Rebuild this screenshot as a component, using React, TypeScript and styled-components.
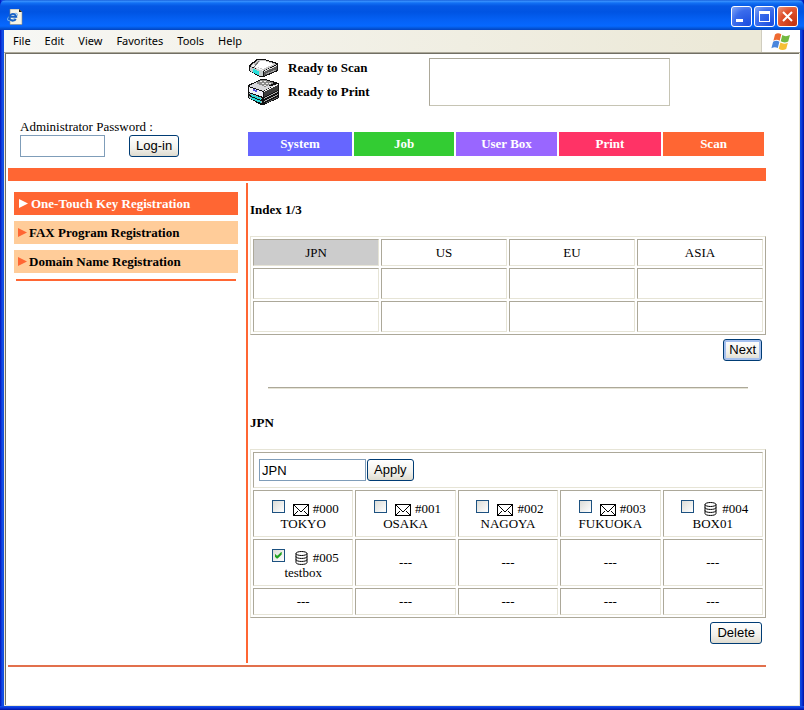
import React, { useState } from "react";
import styled, { createGlobalStyle, css } from "styled-components";

const ORANGE = "#ff6633";
const SERIF = `"Liberation Serif", "Times New Roman", serif`;
const SANS = `"Liberation Sans", Arial, sans-serif`;
const UI = `"Noto Sans", Tahoma, sans-serif`;

const GlobalStyle = createGlobalStyle`
  *, *::before, *::after { box-sizing: border-box; }
  body {
    margin: 0;
    background: #0831d9;
    font: 13px/16px ${SERIF};
    color: #000;
  }
`;

const Window = styled.div`
  display: flex;
  flex-direction: column;
  min-height: 100vh;
  background: linear-gradient(90deg, #0012b0 0, #0831d9 1px, #1656e8 3px, #0a45dc 4px, #0a45dc calc(100% - 4px), #1048dc calc(100% - 3px), #0831d9 calc(100% - 2px), #00139c 100%);
`;

const TitleBar = styled.header`
  display: flex;
  align-items: center;
  justify-content: space-between;
  height: 30px;
  padding: 3px 6px 0 7px;
  border-radius: 6px 6px 0 0;
  background: linear-gradient(#0a4fd0 0, #3d95ff 1px, #1270f4 3px, #0558e4 6px, #0054e3 12px, #0561f5 20px, #0668ff 26px, #0458dc 28px, #0343c0 30px);
`;

const WindowButtons = styled.div`
  display: flex;
  gap: 2px;
`;

const WindowButton = styled.button<{ $close?: boolean }>`
  width: 21px;
  height: 21px;
  padding: 0;
  border: 1px solid #fff;
  border-radius: 3px;
  background: ${(p) =>
    p.$close
      ? "radial-gradient(circle at 85% 90%, #c23410 0, #e0512c 60%, #ea9a82 100%)"
      : "radial-gradient(circle at 85% 90%, #1c4fe0 0, #3a6cec 60%, #86a9f6 100%)"};

  svg { display: block; }
`;

const Frame = styled.div`
  display: flex;
  flex: 1;
  flex-direction: column;
  margin: 0 4px;
  background: #ece9d8;
`;

const BottomEdge = styled.div`
  height: 4px;
  background: linear-gradient(#1656e8, #0831d9 50%, #00139c);
`;

const MenuBar = styled.nav`
  display: flex;
  align-items: stretch;
  height: 23px;
  padding-left: 9px;
  background: linear-gradient(90deg, #f7f7f4, #ece9d8 90%);
  border-bottom: 1px solid #aca899;
`;

const MenuItem = styled.button`
  margin-right: 14px;
  padding: 0;
  border: 0;
  background: none;
  font: 11px/20px ${UI};
  color: #000;
`;

const Throbber = styled.div`
  display: flex;
  align-items: center;
  justify-content: center;
  width: 39px;
  margin-left: auto;
  border-left: 1px solid #d0cdbf;
  background: #fff;
`;

const Page = styled.main`
  flex: 1;
  margin-right: 1px;
  margin-bottom: 1px;
  margin-left: 1px;
  padding: 4px 33px 38px 2px;
  border-top: 1px solid #716f64;
  border-left: 1px solid #716f64;
  background: #fff;
`;

const PageHeader = styled.div`
  display: grid;
  grid-template-columns: 240px 1fr;
  height: 110px;
  padding-right: 2px;
`;

const Login = styled.form`
  align-self: end;
  padding: 0 0 11px 12px;
`;

const LoginLabel = styled.label`
  display: block;
  font-size: 13px;
`;

const LoginRow = styled.div`
  display: flex;
  gap: 24px;
`;

const TextInput = styled.input<{ $width: number }>`
  width: ${(p) => p.$width}px;
  height: 22px;
  padding: 0 2px;
  border: 1px solid #7f9db9;
  border-radius: 0;
  background: #fff;
  font: 13px/16px ${SANS};
  color: #000;
  outline: none;
`;

const PushButton = styled.button<{ $default?: boolean }>`
  height: 22px;
  padding: 0 6px;
  border: 1px solid #003c74;
  border-radius: 3px;
  background: linear-gradient(#fff, #f2f1ec 60%, #dedbcf);
  font: 13px/18px ${SANS};
  color: #000;
  ${(p) =>
    p.$default &&
    css`
      padding: 0 5px;
      box-shadow: inset 0 0 0 2px #a5c0ee;
    `}
`;

const HeaderRight = styled.div`
  display: flex;
  flex-direction: column;
  justify-content: space-between;
  padding-bottom: 12px;
`;

const StatusArea = styled.div`
  display: flex;
`;

const StatusList = styled.div`
  width: 181px;
`;

const StatusLine = styled.div`
  display: flex;
  align-items: center;
  gap: 8px;
  height: 24px;
  padding-bottom: 4px;
  font-weight: bold;

  svg { display: block; }
`;

const MessageBox = styled.div`
  width: 241px;
  height: 48px;
  border: 1px solid;
  border-color: #aca899 #c6c4b4 #c6c4b4 #aca899;
`;

const Tabs = styled.nav`
  display: grid;
  grid-template-columns: 104fr 100fr 101fr 102fr 101fr;
  gap: 2px;
`;

const Tab = styled.a<{ $color: string }>`
  height: 24px;
  background: ${(p) => p.$color};
  color: #fff;
  font-weight: bold;
  line-height: 24px;
  text-align: center;
  text-decoration: none;
`;

const Banner = styled.div`
  height: 13px;
  margin-bottom: 2px;
  background: ${ORANGE};
`;

const Columns = styled.div`
  display: grid;
  grid-template-columns: 238px 1fr;
  margin-bottom: 2px;
`;

const SideMenu = styled.nav`
  display: flex;
  flex-direction: column;
  gap: 6px;
  padding: 9px 8px 0 6px;
`;

const SideItem = styled.a<{ $active?: boolean }>`
  display: flex;
  align-items: center;
  gap: ${(p) => (p.$active ? 3 : 2)}px;
  height: 23px;
  padding-left: ${(p) => (p.$active ? 5 : 4)}px;
  background: ${(p) => (p.$active ? ORANGE : "#ffcc99")};
  color: ${(p) => (p.$active ? "#fff" : "#000")};
  font-weight: bold;
  text-decoration: none;
`;

const SideRule = styled.hr`
  width: 220px;
  height: 2px;
  margin: 0 2px;
  border: 0;
  background: ${ORANGE};
`;

const Content = styled.section`
  padding: 19px 0 19px 2px;
  border-left: 2px solid ${ORANGE};
`;

const Heading = styled.h2`
  margin: 0 0 18px;
  font-size: 13px;
  line-height: 16px;
`;

const Grid = styled.table`
  width: 100%;
  table-layout: fixed;
  border: 1px solid;
  border-color: #e6e4d6 #aca899 #aca899 #e6e4d6;
  border-collapse: separate;
  border-spacing: 2px;
`;

const Cell = styled.td<{ $height: number; $selected?: boolean; $left?: boolean }>`
  height: ${(p) => p.$height}px;
  padding: 0 5px;
  border: 1px solid;
  border-color: #aca899 #e6e4d6 #e6e4d6 #aca899;
  background: ${(p) => (p.$selected ? "#cccccc" : "#fff")};
  text-align: ${(p) => (p.$left ? "left" : "center")};
`;

const Actions = styled.div`
  display: flex;
  justify-content: flex-end;
  padding: 4px 4px 0 0;
`;

const Divider = styled.hr`
  height: 2px;
  margin: 26px 18px;
  border: 0;
  border-top: 1px solid #aca899;
  border-bottom: 1px solid #e6e4d6;
`;

const NameForm = styled.form`
  display: flex;
  gap: 1px;
`;

const Entry = styled.label`
  display: block;
  line-height: 15px;
`;

const EntryLine = styled.span`
  display: flex;
  align-items: flex-end;
  justify-content: center;
  height: 19px;
`;

const EntryIcon = styled.span`
  display: flex;
  margin: 0 4px 0 8px;
`;

const CheckBox = styled.input`
  display: grid;
  place-items: center;
  appearance: none;
  width: 13px;
  height: 13px;
  margin: 0 0 3px 4px;
  border: 1px solid #1c5180;
  background: linear-gradient(135deg, #dcdcd7, #fff);

  &:checked::after {
    content: "";
    width: 7px;
    height: 7px;
    background: #21a121;
    clip-path: polygon(0 2px, 2px 4px, 3px 4px, 7px 0, 7px 3px, 3px 7px, 2px 7px, 0 5px);
  }
`;

const BottomRule = styled.hr`
  height: 2px;
  margin: 0;
  border: 0;
  background: #e2704c;
`;

const PageIcon = () => (
  <svg width="16" height="16" viewBox="0 0 16 16" aria-hidden="true">
    <path d="M3 0h9l3 3v12.500H3z" fill="#f6f4e6" stroke="#8a8a80" strokeWidth=".6" />
    <path d="M12 0v3h3z" fill="#222" />
    <ellipse cx="5.500" cy="8" rx="5.500" ry="2.200" transform="rotate(-32 5.500 8)" fill="none" stroke="#7db8ec" />
    <path d="M8.800 10a3.400 3.400 0 1 1 .4-2.300H3.200" fill="none" stroke="#1660c4" strokeWidth="1.900" />
  </svg>
);

const FlagIcon = () => (
  <svg width="20" height="19" viewBox="0 0 20 19" aria-hidden="true">
    <path d="M4 2.500c2-1.700 4-1.500 6.300-.2L8.700 8.700C6.700 7.400 4.600 7.400 2.400 8.700z" fill="#ee6a32" />
    <path d="M11.300 3c2 1.400 4.600 1.600 7.700.1l-1.800 6.500c-3 1.300-5.400 1-7.500-.3z" fill="#72b840" />
    <path d="M2.100 9.800c2.200-1.300 4.300-1.300 6.300 0l-1.600 6.300c-2-1.300-4.200-1.200-6.400.1z" fill="#4a86dc" />
    <path d="M9.400 10.500c2.100 1.300 4.500 1.600 7.500.3l-1.700 6.300c-2.900 1.500-5.400 1-7.500-.3z" fill="#f5bf35" />
  </svg>
);

const ScanIcon = () => (
  <svg width="32" height="20" viewBox="0 0 32 20" shapeRendering="crispEdges" aria-hidden="true">
    <path d="M1 7L9 1h7l14 4v8l-14 6h-4L1 13z" fill="#111" />
    <path d="M2 8l8-6h6l13 4-12 6-3 1z" fill="#c8c8c8" />
    <path d="M7 8l5-5h4l10 3-11 5z" fill="#fff" />
    <path d="M3 8l3-2 1 2 8 4v1z" fill="#f4f4f4" />
    <path d="M6 9l5-6" stroke="#777" fill="none" />
    <path d="M2 9l13 4v5h-3L2 13z" fill="#c4cccc" />
    <path d="M5 11l6 2v4l-6-2z" fill="#28e0dc" />
    <path d="M16 13l13-6v5l-13 6z" fill="#5a5a5a" />
    <path d="M16 13l13-6v1l-13 6z" fill="#ddd" />
    <path d="M18 16l10-4" stroke="#999" fill="none" />
  </svg>
);

const PrintIcon = () => (
  <svg width="32" height="26" viewBox="0 0 32 26" shapeRendering="crispEdges" aria-hidden="true">
    <path d="M0 6l9-4 4-2h4l14 4v15l-15 7h-3L0 19z" fill="#111" />
    <path d="M1 7l8-4 14 4 7-2-15 7z" fill="#d8d8dc" />
    <path d="M8 4l5-3h4l9 3-9 4z" fill="#8a8a8a" />
    <path d="M12 2h2v1h-2zM16 2h2v1h-2zM14 4h2v1h-2zM18 4h2v1h-2zM21 4h2v1h-2zM16 6h2v1h-2z" fill="#eee" />
    <path d="M1 8l14 5v5L1 13z" fill="#f0f0f8" />
    <path d="M5 10l4 1v2l-4-1z" fill="#5656dc" />
    <path d="M1 14l13 5v1L1 15zM1 17l13 5v2L1 19z" fill="#a9b6b6" />
    <path d="M3 15l10 4v2L3 17zM3 18l10 4v2L3 20z" fill="#28d8d8" />
    <path d="M3 17l10 4v1L3 18z" fill="#111" />
    <path d="M16 13l14-7v5l-14 7z" fill="#3c3c3c" />
    <path d="M16 12l14-7v1l-14 7z" fill="#f4f4f4" />
    <path d="M16 19l14-7v1l-14 7zM16 22l14-7v1l-14 7z" fill="#aaa" />
    <path d="M18 24l12-6" stroke="#555" fill="none" />
  </svg>
);

const ArrowIcon = ({ color }: { color: string }) => (
  <svg width="9" height="9" viewBox="0 0 9 9" aria-hidden="true">
    <path d="M0 0l9 4.500L0 9z" fill={color} />
  </svg>
);

const MailIcon = () => (
  <svg width="16" height="12" viewBox="0 0 16 12" shapeRendering="crispEdges" aria-hidden="true">
    <g fill="none" stroke="#000">
      <path d="M.5.5h15v11H.5z" />
      <path d="M1 1l6 6h2l6-6M1 11l4-4M15 11l-4-4" />
    </g>
  </svg>
);

const BoxIcon = () => (
  <svg width="16" height="14" viewBox="0 0 16 14" aria-hidden="true">
    <g fill="none" stroke="#000">
      <ellipse cx="8.500" cy="2.500" rx="5.500" ry="2" />
      <path d="M3 2.500v9c0 2.600 11 2.600 11 0v-9M3 5.500c0 2.600 11 2.600 11 0M3 8.500c0 2.600 11 2.600 11 0" />
    </g>
  </svg>
);

const MENUS = ["File", "Edit", "View", "Favorites", "Tools", "Help"];

const TABS = [
  { name: "System", color: "#6666ff" },
  { name: "Job", color: "#33cc33" },
  { name: "User Box", color: "#9966ff" },
  { name: "Print", color: "#ff3366" },
  { name: "Scan", color: ORANGE },
];

const SIDE_ITEMS = ["One-Touch Key Registration", "FAX Program Registration", "Domain Name Registration"];

const INDEX_ROWS = [
  { height: 27, names: ["JPN", "US", "EU", "ASIA"] },
  { height: 31, names: ["", "", "", ""] },
  { height: 31, names: ["", "", "", ""] },
];

type Key = { id: string; name: string; kind: "mail" | "box"; checked?: boolean };

const KEY_ROWS: { height: number; keys: (Key | null)[] }[] = [
  {
    height: 47,
    keys: [
      { id: "#000", name: "TOKYO", kind: "mail" },
      { id: "#001", name: "OSAKA", kind: "mail" },
      { id: "#002", name: "NAGOYA", kind: "mail" },
      { id: "#003", name: "FUKUOKA", kind: "mail" },
      { id: "#004", name: "BOX01", kind: "box" },
    ],
  },
  { height: 47, keys: [{ id: "#005", name: "testbox", kind: "box", checked: true }, null, null, null, null] },
  { height: 27, keys: [null, null, null, null, null] },
];

const KeyEntry = ({ entry }: { entry: Key }) => (
  <Entry>
    <EntryLine>
      <CheckBox type="checkbox" defaultChecked={entry.checked} />
      <EntryIcon>{entry.kind === "mail" ? <MailIcon /> : <BoxIcon />}</EntryIcon>
      {entry.id}
    </EntryLine>
    {entry.name}
  </Entry>
);

export default function App() {
  const [indexName, setIndexName] = useState("JPN");
  const stop = (e: React.FormEvent) => e.preventDefault();

  return (
    <>
      <GlobalStyle />
      <Window>
        <TitleBar>
          <PageIcon />
          <WindowButtons>
            <WindowButton aria-label="Minimize">
              <svg width="19" height="19" aria-hidden="true">
                <path d="M4 12h7v3H4z" fill="#fff" />
              </svg>
            </WindowButton>
            <WindowButton aria-label="Maximize">
              <svg width="19" height="19" aria-hidden="true">
                <path d="M4 4h11v11H4zM5 7v7h9V7z" fill="#fff" fillRule="evenodd" />
              </svg>
            </WindowButton>
            <WindowButton $close aria-label="Close">
              <svg width="19" height="19" aria-hidden="true">
                <path d="M5 5l9 9M14 5l-9 9" stroke="#fff" strokeWidth="2" />
              </svg>
            </WindowButton>
          </WindowButtons>
        </TitleBar>

        <Frame>
          <MenuBar>
            {MENUS.map((name) => (
              <MenuItem key={name}>{name}</MenuItem>
            ))}
            <Throbber>
              <FlagIcon />
            </Throbber>
          </MenuBar>

          <Page>
            <PageHeader>
              <Login onSubmit={stop}>
                <LoginLabel htmlFor="password">Administrator Password :</LoginLabel>
                <LoginRow>
                  <TextInput id="password" type="password" $width={85} />
                  <PushButton>Log-in</PushButton>
                </LoginRow>
              </Login>
              <HeaderRight>
                <StatusArea>
                  <StatusList>
                    <StatusLine>
                      <ScanIcon />
                      Ready to Scan
                    </StatusLine>
                    <StatusLine>
                      <PrintIcon />
                      Ready to Print
                    </StatusLine>
                  </StatusList>
                  <MessageBox />
                </StatusArea>
                <Tabs>
                  {TABS.map((tab) => (
                    <Tab key={tab.name} href="#" $color={tab.color}>
                      {tab.name}
                    </Tab>
                  ))}
                </Tabs>
              </HeaderRight>
            </PageHeader>

            <Banner />

            <Columns>
              <SideMenu>
                {SIDE_ITEMS.map((name, i) => (
                  <SideItem key={name} href="#" $active={i === 0}>
                    <ArrowIcon color={i === 0 ? "#fff" : ORANGE} />
                    {name}
                  </SideItem>
                ))}
                <SideRule />
              </SideMenu>

              <Content>
                <Heading>Index 1/3</Heading>
                <Grid>
                  <tbody>
                    {INDEX_ROWS.map((row, r) => (
                      <tr key={r}>
                        {row.names.map((name, c) => (
                          <Cell key={c} $height={row.height} $selected={name === "JPN"}>
                            {name}
                          </Cell>
                        ))}
                      </tr>
                    ))}
                  </tbody>
                </Grid>
                <Actions>
                  <PushButton $default>Next</PushButton>
                </Actions>

                <Divider />

                <Heading>JPN</Heading>
                <Grid>
                  <tbody>
                    <tr>
                      <Cell $height={36} $left colSpan={5}>
                        <NameForm onSubmit={stop}>
                          <TextInput
                            aria-label="Index name"
                            $width={107}
                            value={indexName}
                            onChange={(e) => setIndexName(e.target.value)}
                          />
                          <PushButton>Apply</PushButton>
                        </NameForm>
                      </Cell>
                    </tr>
                    {KEY_ROWS.map((row, r) => (
                      <tr key={r}>
                        {row.keys.map((entry, c) => (
                          <Cell key={c} $height={row.height}>
                            {entry ? <KeyEntry entry={entry} /> : "---"}
                          </Cell>
                        ))}
                      </tr>
                    ))}
                  </tbody>
                </Grid>
                <Actions>
                  <PushButton>Delete</PushButton>
                </Actions>
              </Content>
            </Columns>

            <BottomRule />
          </Page>
        </Frame>
        <BottomEdge />
      </Window>
    </>
  );
}
